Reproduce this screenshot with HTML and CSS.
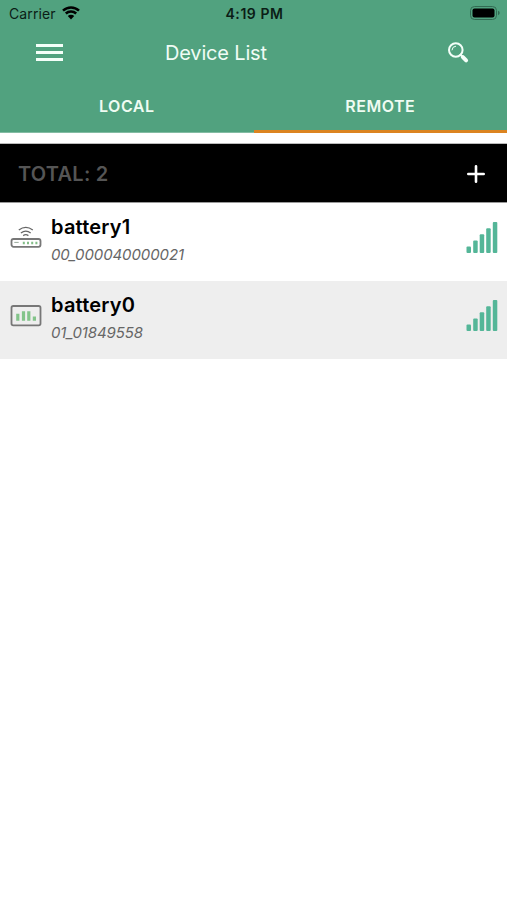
FILE: index.html
```html
<!DOCTYPE html>
<html lang="en">
  <head>
    <meta charset="UTF-8" />
    <meta name="viewport" content="width=device-width, initial-scale=1.0" />
    <title>Device List</title>
    <link rel="stylesheet" href="styles.css" />
  </head>
  <body>
    <header class="header">
      <div class="status-bar">
        <div class="carrier">
          <span>Carrier</span>
          <svg class="wifi" width="18" height="14" viewBox="0 0 18 14">
            <path d="M1 4.6a11.6 11.6 0 0 1 16 0" />
            <path d="M3.8 7.5a7.6 7.6 0 0 1 10.4 0" />
            <path class="dot" d="M5.8 10a4.6 4.6 0 0 1 6.4 0L9 13.5z" />
          </svg>
        </div>
        <div class="time">4:19 PM</div>
        <svg class="battery" width="30" height="14" viewBox="0 0 30 14">
          <rect class="shell" x="0.5" y="0.5" width="26" height="13" rx="4" />
          <rect x="2.5" y="2.5" width="22" height="9" rx="2" />
          <path class="cap" d="M28 4.8q1.7.6 1.7 2.2T28 9.2z" />
        </svg>
      </div>
      <div class="nav-bar">
        <button class="menu" aria-label="Menu">
          <span></span>
          <span></span>
          <span></span>
        </button>
        <h1>Device List</h1>
        <button class="search" aria-label="Search">
          <svg width="22" height="22" viewBox="0 0 22 22">
            <circle cx="8.8" cy="8" r="6.8" />
            <path class="shine" d="M5 7.9a3.8 3.8 0 0 1 3.6-3.7" />
            <path class="neck" d="M13.5 12.8l2.5 2.5" />
            <path class="handle" d="M15.9 15.1l3.2 3.2" />
          </svg>
        </button>
      </div>
      <nav class="tabs">
        <a class="tab">LOCAL</a>
        <a class="tab active">REMOTE</a>
      </nav>
    </header>

    <section class="total-bar">
      <span class="total">TOTAL: 2</span>
      <button class="add" aria-label="Add">
        <svg width="18" height="18" viewBox="0 0 18 18">
          <path d="M9 1.3v15.4M1.3 9h15.4" />
        </svg>
      </button>
    </section>

    <ul class="device-list">
      <li class="device">
        <svg class="device-icon" width="32" height="32" viewBox="0 0 32 32">
          <rect class="outline" x="1.5" y="18" width="29" height="7.8" rx="2" />
          <path class="wave" d="M8.8 9q7-5.2 14 0M10.9 11.9q4.9-3.6 9.8 0M13.2 14.6q2.6-1.8 5.2 0" />
          <path class="led" d="M4.3 21.4h4.4" />
          <path class="light" d="M12.8 22h2M17 22h2M21.2 22h2M25.4 22h2" />
        </svg>
        <div class="info">
          <h2>battery1</h2>
          <p class="serial">00_000040000021</p>
        </div>
        <svg class="signal" width="32" height="32" viewBox="0 0 32 32">
          <rect x="0.5" y="24.5" width="4.5" height="6.5" rx="1" />
          <rect x="7.2" y="18.5" width="4.5" height="12.5" rx="1" />
          <rect x="13.7" y="12.2" width="4.5" height="18.8" rx="1" />
          <rect x="20.2" y="6.2" width="4.5" height="24.8" rx="1" />
          <rect x="26.8" y="0" width="4.5" height="31" rx="1" />
        </svg>
      </li>
      <li class="device">
        <svg class="device-icon" width="32" height="32" viewBox="0 0 32 32">
          <rect class="outline" x="1.5" y="7" width="29" height="19.4" rx="1.8" />
          <path class="chart" d="M7.8 14.8v7M13.5 12.2v9.6M18.8 12.2v9.6M24.4 17.6v4.2" />
        </svg>
        <div class="info">
          <h2>battery0</h2>
          <p class="serial">01_01849558</p>
        </div>
        <svg class="signal" width="32" height="32" viewBox="0 0 32 32">
          <rect x="0.5" y="24.5" width="4.5" height="6.5" rx="1" />
          <rect x="7.2" y="18.5" width="4.5" height="12.5" rx="1" />
          <rect x="13.7" y="12.2" width="4.5" height="18.8" rx="1" />
          <rect x="20.2" y="6.2" width="4.5" height="24.8" rx="1" />
          <rect x="26.8" y="0" width="4.5" height="31" rx="1" />
        </svg>
      </li>
    </ul>
  </body>
</html>
```
FILE: styles.css
```css
* {
  margin: 0;
  padding: 0;
  box-sizing: border-box;
}

body {
  font-family: Inter, "Liberation Sans", sans-serif;
  background-color: #fff;
  color: #000;
}
button {
  background: none;
  border: none;
}
svg {
  display: block;
  fill: none;
}
.header {
  height: 133px;
  background-color: #51a27f;
}
.status-bar {
  display: grid;
  grid-template-columns: 1fr auto 1fr;
  align-items: center;
  height: 27px;
  padding: 0 7px 0 9px;
  color: #0b1d16;
}
.carrier {
  display: flex;
  align-items: center;
  gap: 6px;
  font-size: 14px;
  letter-spacing: 0.1px;
}
.wifi {
  margin-top: -1px;
}
.wifi path {
  stroke: #000;
  stroke-width: 2.5;
}
.wifi .dot {
  fill: #000;
  stroke: none;
}
.time {
  font-size: 14px;
  font-weight: 600;
  letter-spacing: 0.55px;
}
.battery {
  justify-self: end;
  margin-top: -1px;
  fill: #000;
}
.battery .shell {
  fill: none;
  stroke: #326b53;
}
.battery .cap {
  fill: #326b53;
}
.nav-bar {
  display: flex;
  align-items: center;
  height: 52px;
  padding: 0 38px 0 36px;
}
.menu {
  display: flex;
  flex-direction: column;
  gap: 4px;
  width: 27px;
  margin-top: -1px;
}
.menu span {
  height: 3px;
  background-color: #f4fff9;
}
.nav-bar h1 {
  margin-left: 102px;
  color: #effcf5;
  font-size: 20px;
  font-weight: 400;
  letter-spacing: -0.17px;
}
.search {
  margin-left: auto;
}
.search svg {
  stroke: #f4fff9;
  stroke-width: 2;
  stroke-linecap: round;
}
.search .shine {
  stroke-width: 1;
}
.search .handle {
  stroke-width: 4;
}
.tabs {
  display: grid;
  grid-template-columns: 1fr 1fr;
  height: 54px;
}
.tab {
  padding-top: 3px;
  border-bottom: 1px solid #83bca3;
  color: #effcf2;
  font-size: 16px;
  font-weight: 600;
  letter-spacing: 0.5px;
  line-height: 48px;
  text-align: center;
}
.tab.active {
  border-bottom: 3px solid #dc8420;
}
.total-bar {
  display: flex;
  justify-content: space-between;
  align-items: center;
  height: 60px;
  margin-top: 10px;
  padding: 1px 22px 0 18px;
  background-color: #000;
  border-top: 1px solid #bbb;
  border-bottom: 1px solid #999;
}
.total {
  color: #555;
  font-size: 20px;
  font-weight: 600;
  letter-spacing: 0.25px;
}
.add svg {
  stroke: #fff;
  stroke-width: 2.6;
  stroke-linecap: round;
}
.device-list {
  list-style: none;
}
.device {
  display: flex;
  height: 78px;
  padding: 0 9px 0 10px;
}
.device:nth-child(even) {
  background-color: #eee;
}
.device-icon {
  margin-top: 18px;
}
.outline {
  stroke: #777;
  stroke-width: 1.8;
}
.wave {
  stroke: #666;
  stroke-width: 1.3;
}
.led {
  stroke: #9aaa9c;
  stroke-width: 1;
}
.light {
  stroke: #83bd88;
  stroke-width: 2.4;
}
.chart {
  stroke: #83c48a;
  stroke-width: 3.2;
}
.info {
  margin: 11px auto 0 9px;
}
.info h2 {
  font-size: 20px;
  font-weight: 600;
  letter-spacing: 0.2px;
  line-height: 26px;
}
.serial {
  margin-top: 5px;
  color: #666;
  font-size: 15px;
  font-style: italic;
  letter-spacing: -0.1px;
  line-height: 20px;
}
.signal {
  margin-top: 19px;
  fill: #54b698;
}
```
